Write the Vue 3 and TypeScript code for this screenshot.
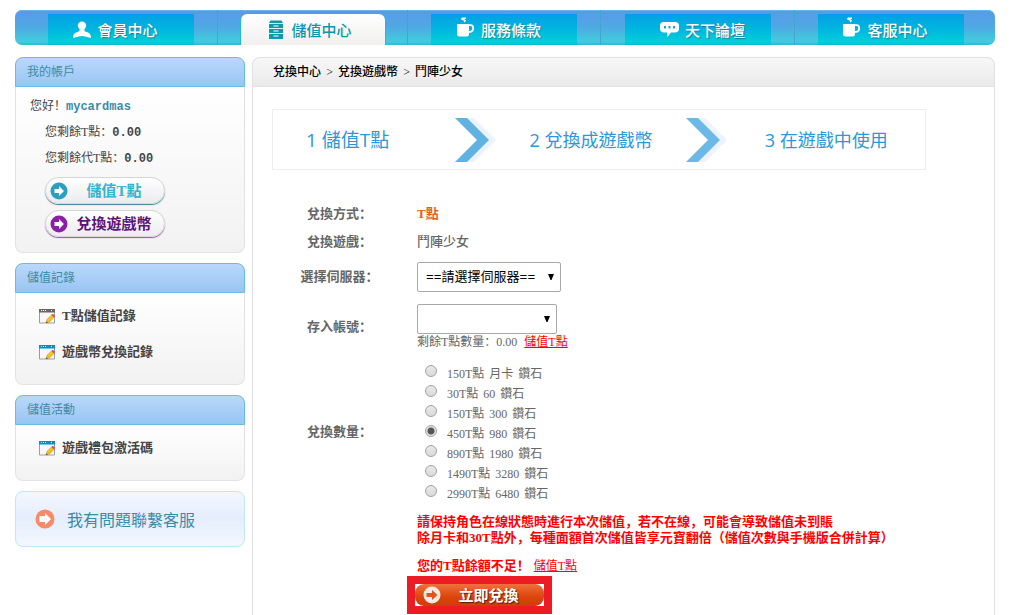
<script setup lang="ts">
import { ref } from 'vue'

interface NavItem { label: string; icon: 'user' | 'cabinet' | 'cup' | 'chat'; active?: boolean }
interface Pack { id: number; points: string; amount: string }

const navItems: NavItem[] = [
  { label: '會員中心', icon: 'user' },
  { label: '儲值中心', icon: 'cabinet', active: true },
  { label: '服務條款', icon: 'cup' },
  { label: '天下論壇', icon: 'chat' },
  { label: '客服中心', icon: 'cup' },
]

const packs: Pack[] = [
  { id: 1, points: '150T點', amount: '月卡' },
  { id: 2, points: '30T點', amount: '60' },
  { id: 3, points: '150T點', amount: '300' },
  { id: 4, points: '450T點', amount: '980' },
  { id: 5, points: '890T點', amount: '1980' },
  { id: 6, points: '1490T點', amount: '3280' },
  { id: 7, points: '2990T點', amount: '6480' },
]

const recordLinks = [
  { label: 'T點儲值記錄', bar: '#6b6664' },
  { label: '遊戲幣兌換記錄', bar: '#0a8fc4' },
]
const eventLinks = [{ label: '遊戲禮包激活碼', bar: '#0a8fc4' }]
const linkGroups = [
  { title: '儲值記錄', links: recordLinks },
  { title: '儲值活動', links: eventLinks },
]

const server = ref('')
const account = ref('')
const selectedPack = ref(4)
</script>

<template>
  <div class="page">
    <nav class="nav">
      <div v-for="item in navItems" :key="item.label" class="nav-cell">
        <a href="#" class="nav-item" :class="[`nav-item--${item.icon}`, { 'nav-item--active': item.active }]">
          <svg v-if="item.icon === 'user'" width="18" height="18" viewBox="0 0 18 18" fill="#fff" aria-hidden="true">
            <circle cx="9" cy="4.6" r="4.2" />
            <path d="M6.500 8.300h5v2q5 1.300 6 3.700.5 1 .5 3l-5-1.200Q9 14 5 15.800L0 17q0-2 .5-3 1-2.400 6-3.700z" />
          </svg>
          <svg v-else-if="item.icon === 'cabinet'" width="14" height="20" viewBox="0 0 14 20" aria-hidden="true">
            <path d="M1.500.5h11L14 3v16H0V3z" fill="#0d9aa9" />
            <path d="M0 3.500h14M0 8.500h14M0 13.500h14" stroke="#d9f1f2" stroke-width="1" />
            <path d="M4.500 6h5M4.500 11h5M4.500 16h5" stroke="#fff" stroke-width="1.200" />
          </svg>
          <svg v-else-if="item.icon === 'cup'" class="icon-cup" width="18" height="21" viewBox="0 0 18 21" aria-hidden="true">
            <path d="M9 1.200H5.500q-1.500.3 0 1.200l2 .6q1.500.8-.5 1.800" fill="none" stroke="#fff" stroke-width="1.400" />
            <path d="M0 7h12v10q0 2.500-2.500 2.500h-7Q0 19.500 0 17z" fill="#fff" />
            <path d="M11 8.200h2.500q2.700 0 2.700 3t-2.700 3.600H11" fill="none" stroke="#fff" stroke-width="1.800" />
          </svg>
          <svg v-else width="19" height="17" viewBox="0 0 19 17" aria-hidden="true">
            <path d="M4 1h11q4 0 4 3.500v3q0 4-4 4h-4L7.500 16l-.3-4.500H4q-4 0-4-4v-3Q0 1 4 1z" fill="#fff" />
            <path d="M4 5h2v2.500H4zM8.500 5h2v2.500h-2zM13 5h2v2.500h-2z" fill="#12a9d5" />
          </svg>
          <span>{{ item.label }}</span>
        </a>
      </div>
    </nav>

    <div class="columns">
      <aside class="sidebar">
        <section class="panel">
          <h2 class="panel-title">我的帳戶</h2>
          <div class="account">
            <p>您好！<b class="user">mycardmas</b></p>
            <p class="indent">您剩餘T點：<b>0.00</b></p>
            <p class="indent">您剩餘代T點：<b>0.00</b></p>
            <a href="#" class="pill pill--cyan">
              <svg width="18" height="18" viewBox="0 0 18 18" aria-hidden="true">
                <circle cx="9" cy="9" r="8.500" fill="#2b9fc0" />
                <path d="M4.500 7h4.500V4l5 5-5 5v-3H4.500z" fill="#fff" />
              </svg>
              <span>儲值T點</span>
            </a>
            <a href="#" class="pill pill--purple">
              <svg width="18" height="18" viewBox="0 0 18 18" aria-hidden="true">
                <circle cx="9" cy="9" r="8.500" fill="#8c1fa8" />
                <path d="M4.500 7h4.500V4l5 5-5 5v-3H4.500z" fill="#fff" />
              </svg>
              <span>兌換遊戲幣</span>
            </a>
          </div>
        </section>

        <section v-for="group in linkGroups" :key="group.title" class="panel">
          <h2 class="panel-title">{{ group.title }}</h2>
          <ul class="links">
            <li v-for="link in group.links" :key="link.label">
              <a href="#">
                <svg width="16" height="15" viewBox="0 0 16 15" aria-hidden="true">
                  <path d="M.5 2.500h15v11.500H.5z" fill="#f7f7f7" stroke="#9a9ea2" />
                  <path d="M0 0h16v3.500H0z" :fill="link.bar" />
                  <path d="M2 1.500h5M12 1.500h2" stroke="#fff" stroke-dasharray="1 1" />
                  <path d="M7 14l1-3.600 4.500-4.400 2.500 2.400-4.500 4.500z" fill="#f6c21f" stroke="#b8860b" stroke-width=".5" />
                  <path d="M12.500 6l1.200-1.200 2.300 2-1 1.600z" fill="#e4453a" />
                  <path d="M7 14l.5-1.800 1.400 1.300z" fill="#444" />
                </svg>
                <span>{{ link.label }}</span>
              </a>
            </li>
          </ul>
        </section>

        <a href="#" class="contact">
          <svg width="20" height="20" viewBox="0 0 20 20" aria-hidden="true">
            <circle cx="10" cy="10" r="9.500" fill="#f58b68" />
            <path d="M4.500 7H10V4l6 6-6 6v-3H4.500z" fill="#fff" />
          </svg>
          <span>我有問題聯繫客服</span>
        </a>
      </aside>

      <main class="main">
        <div class="crumbs">
          <span>兌換中心</span><i>&gt;</i><span>兌換遊戲幣</span><i>&gt;</i><span>鬥陣少女</span>
        </div>

        <ol class="steps">
          <li>1 儲值T點</li>
          <li class="arrow" aria-hidden="true">
            <svg width="41" height="46" viewBox="0 0 41 46">
              <path d="M12 1h7l22 22-22 22h-7l20-22z" fill="#edf2ff" />
              <path d="M0 1h12l22 22-22 22H0l22-22z" fill="#60b2e3" />
            </svg>
          </li>
          <li>2 兌換成遊戲幣</li>
          <li class="arrow" aria-hidden="true">
            <svg width="41" height="46" viewBox="0 0 41 46">
              <path d="M12 1h7l22 22-22 22h-7l20-22z" fill="#edf2ff" />
              <path d="M0 1h12l22 22-22 22H0l22-22z" fill="#6cb8e6" />
            </svg>
          </li>
          <li>3 在遊戲中使用</li>
        </ol>

        <form class="form" @submit.prevent>
          <div class="row">
            <span class="label">兌換方式：</span>
            <b class="method">T點</b>
          </div>
          <div class="row">
            <span class="label">兌換遊戲：</span>
            <span class="game">鬥陣少女</span>
          </div>
          <div class="row row--select">
            <label class="label" for="server">選擇伺服器：</label>
            <div class="select">
              <select id="server" v-model="server">
                <option value="">==請選擇伺服器==</option>
              </select>
              <svg width="6" height="6" viewBox="0 0 6 6" aria-hidden="true"><path d="M0 0h6L3.500 6h-1z" /></svg>
            </div>
          </div>
          <div class="row row--account">
            <label class="label" for="account">存入帳號：</label>
            <div>
              <div class="select select--account">
                <select id="account" v-model="account"><option value=""></option></select>
                <svg width="6" height="6" viewBox="0 0 6 6" aria-hidden="true"><path d="M0 0h6L3.500 6h-1z" /></svg>
              </div>
              <p class="balance">
                <span>剩餘T點數量：0.00</span><a href="#">儲值T點</a>
              </p>
            </div>
          </div>
          <div class="row row--packs" role="radiogroup" aria-labelledby="packs-label">
            <span id="packs-label" class="label">兌換數量：</span>
            <div class="packs">
              <label v-for="pack in packs" :key="pack.id" class="pack">
                <input v-model="selectedPack" type="radio" name="pack" :value="pack.id" />
                <span class="pack-text">
                  <span>{{ pack.points }}</span><span>{{ pack.amount }}</span><span>鑽石</span>
                </span>
              </label>
            </div>
          </div>

          <div class="notice">
            <p>請保持角色在線狀態時進行本次儲值，若不在線，可能會導致儲值未到賬</p>
            <p>除月卡和30T點外，每種面額首次儲值皆享元寶翻倍（儲值次數與手機版合併計算）</p>
            <p class="short"><span>您的T點餘額不足！</span><a href="#">儲值T點</a></p>
          </div>

          <div class="submit-frame">
            <button type="submit" class="submit">
              <svg width="18" height="18" viewBox="0 0 18 18" aria-hidden="true">
                <circle cx="9" cy="9" r="8.500" fill="#fde9e0" />
                <path d="M3.500 7H9V4l5.500 5L9 14v-3H3.500z" fill="#e2541f" />
              </svg>
              <span>立即兌換</span>
            </button>
          </div>
        </form>
      </main>
    </div>
  </div>
</template>

<style>
body {
  margin: 0;
  background: #fff;
}
</style>

<style scoped>
.page {
  box-sizing: border-box;
  min-height: 100vh;
  padding: 10px 15px 0;
  display: flex;
  flex-direction: column;
  gap: 12px;
  font: 12px/20px "Liberation Serif", "Noto Sans CJK SC", serif;
  color: #444;
}
p, h2, ul, ol { margin: 0; padding: 0; list-style: none; }
a { text-decoration: none; color: inherit; }
svg { flex: none; display: block; }

.nav {
  height: 35px;
  box-sizing: border-box;
  padding: 0 9px;
  display: grid;
  grid-template-columns: 193fr 190fr 193fr 194fr 192fr;
  border-radius: 7px;
  background: linear-gradient(#5a98ea, #4faae2 50%, #3fcddb 90%, #33b9c8);
  box-shadow: inset 0 1px #6ab4e8;
}
.nav-cell {
  display: flex;
  justify-content: center;
  align-items: flex-end;
}
.nav-cell + .nav-cell { border-left: 1px solid #42a6cf; }
.nav-item {
  box-sizing: border-box;
  width: 146px;
  height: 31px;
  padding-right: 10px;
  display: flex;
  align-items: center;
  justify-content: center;
  gap: 6px;
  color: #fff;
  font: 500 15px/20px "Noto Sans CJK TC", sans-serif;
  text-shadow: 1px 1px 1px #17829b;
  background: linear-gradient(#049fe5, #00b9df 55%, #00cfda 90%, #00bfcd);
}
.nav-item--chat { padding: 0 0 0 10px; }
.icon-cup { margin-bottom: 4px; }
.nav-item--active {
  width: 144px;
  padding-right: 4px;
  gap: 8px;
  color: #0d97a8;
  text-shadow: none;
  background: linear-gradient(#fff, #f1f0ef);
  border-radius: 6px 6px 0 0;
  box-shadow: -1px 0 #20bcd5, 1px 0 #20bcd5;
}

.columns {
  flex: 1;
  display: flex;
  gap: 7px;
}
.sidebar {
  flex: none;
  width: 230px;
  display: flex;
  flex-direction: column;
  gap: 10px;
}
.panel {
  border: 1px solid #e2e2e2;
  border-top: 0;
  border-radius: 8px;
  background: linear-gradient(#fff 30px, #f2f2f2);
}
.panel-title {
  box-sizing: border-box;
  height: 30px;
  margin: 0 -1px;
  padding-left: 11px;
  border: 1px solid #66bde2;
  border-radius: 8px 8px 0 0;
  background: linear-gradient(#bad8fa, #98c5f3);
  color: #3c8ba5;
  font-size: 12px;
  font-weight: 400;
  line-height: 28px;
}
.account {
  padding: 6px 14px 15px;
  line-height: 26px;
}
.account p { height: 26px; }
.account b {
  font-family: "Liberation Mono", monospace;
}
.account .user { color: #3c8ba5; }
.indent { padding-left: 15px; }
.pill {
  box-sizing: border-box;
  width: 120px;
  height: 27px;
  margin: 6px 0 0 15px;
  padding: 0 4px;
  display: flex;
  align-items: center;
  border: 1px solid #d5d5d5;
  border-radius: 14px;
  background: linear-gradient(#fff, #ececf0);
  font-size: 15px;
  font-weight: 700;
}
.pill span { flex: 1; text-align: center; white-space: nowrap; }
.pill--cyan { color: #35b4d2; box-shadow: 0 1px 1px #3c8792; }
.pill--purple { color: #5c1478; box-shadow: 0 1px 1px #8a5c9c; }

.links { padding: 5px 23px 14px; }
.links a {
  height: 36px;
  display: flex;
  align-items: center;
  gap: 7px;
  font-size: 13px;
  font-weight: 700;
}
.contact {
  box-sizing: border-box;
  height: 56px;
  padding-left: 19px;
  display: flex;
  align-items: center;
  gap: 12px;
  border: 1px solid #bfe6fb;
  border-radius: 8px;
  background: linear-gradient(#f3f7ff, #e5eefd 50%, #f3f7ff);
  color: #3c8ba5;
  font: 16px/24px "Noto Sans CJK TC", sans-serif;
}

.main {
  flex: 1;
  min-width: 0;
  border: 1px solid #e2e2e2;
  border-width: 0 1px;
  border-radius: 8px 8px 0 0;
}
.crumbs {
  box-sizing: border-box;
  height: 30px;
  margin: 0 -1px;
  padding-left: 20px;
  display: flex;
  align-items: center;
  border: 1px solid #e2e2e2;
  border-radius: 8px 8px 0 0;
  background: linear-gradient(#f8f8f8, #eaeaea);
  color: #000;
  font-weight: 500;
}
.crumbs i {
  width: 17px;
  text-align: center;
  font-style: normal;
}
.steps {
  box-sizing: border-box;
  max-width: 654px;
  height: 61px;
  margin: 22px 19px 0;
  display: flex;
  align-items: center;
  border: 1px solid #eee;
  color: #2c98da;
  font: 18px/24px "Open Sans", "Noto Sans CJK TC", sans-serif;
}
.steps li { flex: 191; text-align: center; }
.steps li:first-child {
  flex-grow: 149;
  padding-left: 33px;
  text-align: left;
  font-size: 19px;
}
.steps li:last-child { flex-grow: 198; }
.steps .arrow { flex: none; }

.form { margin: 30px 19px 0; color: #666; }
.row {
  min-height: 28px;
  display: grid;
  grid-template-columns: 135px 1fr;
  column-gap: 10px;
  align-items: center;
}
.label {
  text-align: center;
  font-size: 13px;
  font-weight: 700;
}
.method { font-size: 13px; color: #e5601a; }
.game { font-size: 13px; font-weight: 500; }
.row--select { min-height: 42px; }
.select {
  width: 144px;
  display: grid;
  align-items: center;
}
.select--account { width: 140px; }
.select select {
  grid-area: 1 / 1;
  box-sizing: border-box;
  appearance: none;
  width: 100%;
  height: 30px;
  margin: 0;
  padding: 2px 8px 0;
  border: 1px solid #a9a9a9;
  border-radius: 2px;
  background: #fff;
  color: #000;
  font: 13px/20px "Liberation Mono", "Noto Sans CJK SC", monospace;
}
.select svg {
  grid-area: 1 / 1;
  justify-self: end;
  margin-right: 7px;
  pointer-events: none;
}
.row--account { padding-top: 6px; }
.balance {
  display: flex;
  gap: 7px;
  line-height: 16px;
}
.form a { color: #f00; text-decoration: underline; }
.row--packs { padding-top: 10px; }
.packs { padding-top: 4px; }
.pack {
  height: 20px;
  padding-left: 8px;
  display: flex;
  gap: 10px;
  align-items: flex-start;
}
.pack input {
  appearance: none;
  box-sizing: border-box;
  width: 12px;
  height: 12px;
  margin: 1px 0 0;
  border: 1px solid #a2a2a2;
  border-radius: 50%;
  background: linear-gradient(#e8e8e8, #dadada);
}
.pack input:checked {
  background: radial-gradient(circle, #555 3px, #e2e2e2 4px);
}
.pack-text { display: flex; gap: 5px; }
.notice {
  padding: 10px 0 0 145px;
  color: #f00;
  font-size: 13px;
  font-weight: 700;
  line-height: 16px;
}
.short {
  margin-top: 12px;
  display: flex;
  gap: 4px;
}
.short a { font-size: 12px; font-weight: 400; }
.submit-frame {
  width: 129px;
  margin: 2px 0 0 135px;
  border: 8px solid #ed1b24;
  background: #fff;
}
.submit {
  width: 100%;
  height: 22px;
  padding: 0 8px;
  display: flex;
  align-items: center;
  border: 0;
  border-radius: 9px;
  background: linear-gradient(#f0713a, #dc440c 60%, #c93f0c);
  color: #fff;
  font: 700 15px/20px "Noto Sans CJK TC", sans-serif;
  text-shadow: 1px 1px 1px #5c1c00;
}
.submit span { flex: 1; text-align: center; }
</style>
